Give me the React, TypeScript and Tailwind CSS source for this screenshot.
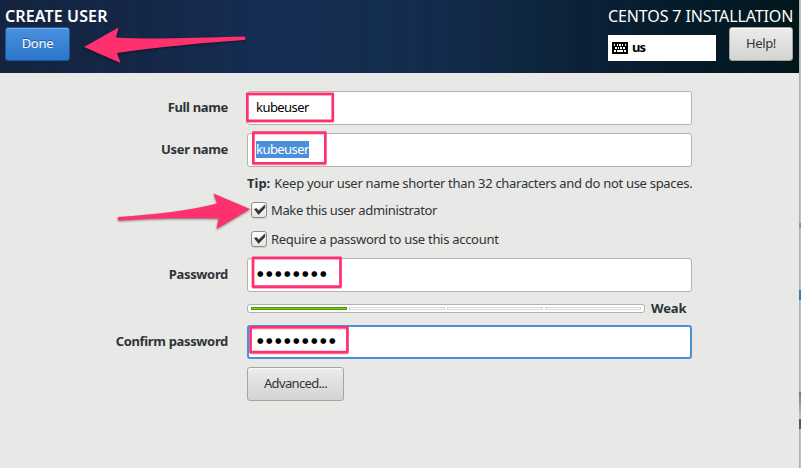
import type { ReactNode } from "react";

function Row({ label, children, className = "" }: { label?: string; children: ReactNode; className?: string }) {
  return (
    <div className={`flex ${className}`}>
      <div className="flex w-[228px] shrink-0 items-center justify-end pb-[2px] font-bold tracking-[-0.34px]">
        <span className="whitespace-nowrap">{label}</span>
      </div>
      <div className="ml-[19px] w-[445px]">{children}</div>
    </div>
  );
}

function Field({ children, focused = false }: { children: ReactNode; focused?: boolean }) {
  return (
    <div
      className={`flex h-[34px] items-center rounded-[3px] bg-white pb-[2px] tracking-[-0.55px] text-black ${
        focused ? "border-2 border-[#4a90d9] pl-[7px]" : "border border-[#b2b2ae] pl-2"
      }`}
    >
      {children}
    </div>
  );
}

function Dots({ children }: { children: string }) {
  return (
    <span className="ml-[1px] whitespace-nowrap font-['DejaVu_Sans',sans-serif] text-[7.5px] leading-none tracking-[2.47px]">
      {children}
    </span>
  );
}

function Check({ children, className }: { children: string; className: string }) {
  return (
    <div className="flex h-[17px] items-start pl-1">
      <span className="flex h-4 w-4 items-center justify-center rounded-[3px] border border-[#8e8e8a] bg-gradient-to-b from-white to-[#e4e4e2] shadow-[0_1px_0_#d0d0cd]">
        <svg className="h-[14px] w-[14px] overflow-visible" viewBox="0 0 14 14">
          <path d="M2.500 6.300 4.500 5.600 6.600 7.900 12.800 2V4.900L6.600 11.400Z" fill="#2e3436" stroke="#2e3436" strokeWidth=".7" />
        </svg>
      </span>
      <span className={`ml-1 whitespace-nowrap leading-[17px] ${className}`}>{children}</span>
    </div>
  );
}

function KeyboardIcon() {
  return (
    <svg className="h-3 w-4" viewBox="0 0 16 12" shapeRendering="crispEdges">
      <rect width="16" height="12" rx="1" />
      <path
        d="M2 2h1v2H2zM5 2h1v2H5zM7 2h2v2H7zM10 2h1v2h-1zM13 2h1v2h-1zM3 5h2v2H3zM6 5h1v2H6zM8 5h2v2H8zM11 5h2v2h-2zM2 8h2v2H2zM5 8h6v2H5zM12 8h2v2h-2z"
        fill="white"
      />
    </svg>
  );
}

function Annotations() {
  return (
    <svg className="pointer-events-none absolute inset-0 h-full w-full" viewBox="0 0 801 468">
      <g className="drop-shadow-[0_1px_1px_rgba(0,0,0,0.45)]" fill="#ff306e">
        <path d="M84 47 118.500 27.500 116 37.500C150 39.500 190 38 244 36.500Q247 38 244.500 40C200 43 160 47 117 53L120.500 63Z" />
        <path d="M250 209 213.500 193.500 217 203.500C190 210.500 155 214.500 118.500 217Q116.500 219 119 220.500C155 218 185 218 218.500 218.500L216.500 229Z" />
      </g>
      <g className="drop-shadow-[0_1px_0.5px_rgba(255,48,110,0.4)]" fill="none" stroke="#ff306e" strokeWidth="2.6" strokeLinejoin="round">
        <rect x="247.300" y="93.800" width="85.500" height="27" />
        <rect x="253.300" y="132.500" width="72" height="30.800" />
        <rect x="253" y="257.800" width="87.500" height="28.800" />
        <rect x="250.600" y="327.300" width="96.800" height="24.800" />
      </g>
    </svg>
  );
}

export default function App() {
  return (
    <div className="relative flex h-[468px] w-[801px] overflow-hidden bg-[#e8e8e6] font-['Noto_Sans',sans-serif] text-[13px] leading-[18px] text-[#2e3436]">
      <main className="w-[799px] shrink-0">
        <header className="flex h-[73px] justify-between bg-[repeating-linear-gradient(90deg,transparent_0px,rgba(60,110,190,0.02)_8px,transparent_13px,rgba(0,0,0,0.03)_23px,transparent_31px),linear-gradient(90deg,#14243f_0%,#142747_18%,#152d53_33%,#132e50_48%,#12294a_58%,#0e263e_66%,#0a2035_75%,#051b29_86%,#02161a_100%)] pl-[5px] pr-[6px] pt-[7px] text-white">
          <div>
            <h1 className="h-5 whitespace-nowrap text-[16px] font-semibold leading-[18px] tracking-[0.12px]">CREATE USER</h1>
            <button className="flex h-[34px] w-[65px] items-center justify-center rounded-[3px] border border-[#1c5699] bg-gradient-to-b from-[#4a90df] to-[#2a76cc] pb-[2px] tracking-[-0.25px] shadow-[inset_0_1px_0_#76aee9]">
              <span className="[text-shadow:0_-1px_0_#1c5699]">Done</span>
            </button>
          </div>
          <div className="w-[185px]">
            <h2 className="h-5 whitespace-nowrap text-[16px] leading-[18px] tracking-[-0.12px]">CENTOS 7 INSTALLATION</h2>
            <div className="flex justify-between">
              <div className="mt-2 flex h-[26px] w-[108px] items-center bg-white pl-1 font-bold text-black">
                <KeyboardIcon />
                <span className="ml-1 pb-[2px] tracking-[-0.9px]">us</span>
              </div>
              <button className="flex h-[34px] w-[64px] items-center justify-center rounded-[3px] border border-[#a1a19c] bg-gradient-to-b from-[#ececeb] to-[#d3d3d1] pb-[2px] tracking-[-0.4px] text-[#2e3436] shadow-[inset_0_1px_0_white]">
                Help!
              </button>
            </div>
          </div>
        </header>

        <section className="pt-[18px]">
          <Row label="Full name"><Field>kubeuser</Field></Row>
          <Row label="User name" className="mt-2">
            <Field><span className="h-[17px] bg-[#4a90d9] leading-[17px] text-white">kubeuser</span></Field>
          </Row>
          <Row className="mt-[7px]">
            <p className="whitespace-nowrap tracking-[-0.3px]"><b className="mr-[1px] tracking-normal">Tip:</b> Keep your user name shorter than 32 characters and do not use spaces.</p>
          </Row>
          <Row className="mt-[10px]"><Check className="tracking-[-0.36px]">Make this user administrator</Check></Row>
          <Row className="mt-[12px]"><Check className="tracking-[-0.29px]">Require a password to use this account</Check></Row>
          <Row label="Password" className="mt-[10px]"><Field><Dots>●●●●●●●●</Dots></Field></Row>
          <Row className="mt-[7px] h-[18px]">
            <div className="flex h-[18px] items-center">
              <div className="flex h-[9px] w-[398px] items-center gap-[2px] rounded-[3px] border border-[#b2b2ae] bg-white px-[3px]">
                <i className="h-[3px] flex-1 border border-[#4e9a06] bg-[#73d216]" />
                <i className="h-[3px] flex-1 border border-[#d8d8d6]" />
                <i className="h-[3px] flex-1 border border-[#d8d8d6]" />
                <i className="h-[3px] flex-1 border border-[#d8d8d6]" />
              </div>
              <b className="ml-[6px] tracking-[-0.1px]">Weak</b>
            </div>
          </Row>
          <Row label="Confirm password" className="mt-2"><Field focused><Dots>●●●●●●●●●</Dots></Field></Row>
          <Row className="mt-2">
            <button className="flex h-[34px] w-[97px] items-center justify-center rounded-[3px] border border-[#a6a6a2] bg-gradient-to-b from-[#ececeb] to-[#d3d3d1] pb-[2px] tracking-[-0.65px] shadow-[inset_0_1px_0_#f8f8f7]">
              Advanced...
            </button>
          </Row>
        </section>
      </main>
      <aside className="flex w-[2px] flex-col bg-gradient-to-r from-[#a5a7aa] to-[#c9cbcd]">
        <span className="mt-[223px] h-[5px] bg-[#929292]" />
        <span className="mt-[62px] h-[10px] bg-[#2b7fba]" />
        <span className="mt-[92px] h-[27px] bg-gradient-to-b from-[#77797b] to-[#c2c4c6]" />
        <span className="h-[10px] bg-[#55585c]" />
      </aside>
      <Annotations />
    </div>
  );
}
